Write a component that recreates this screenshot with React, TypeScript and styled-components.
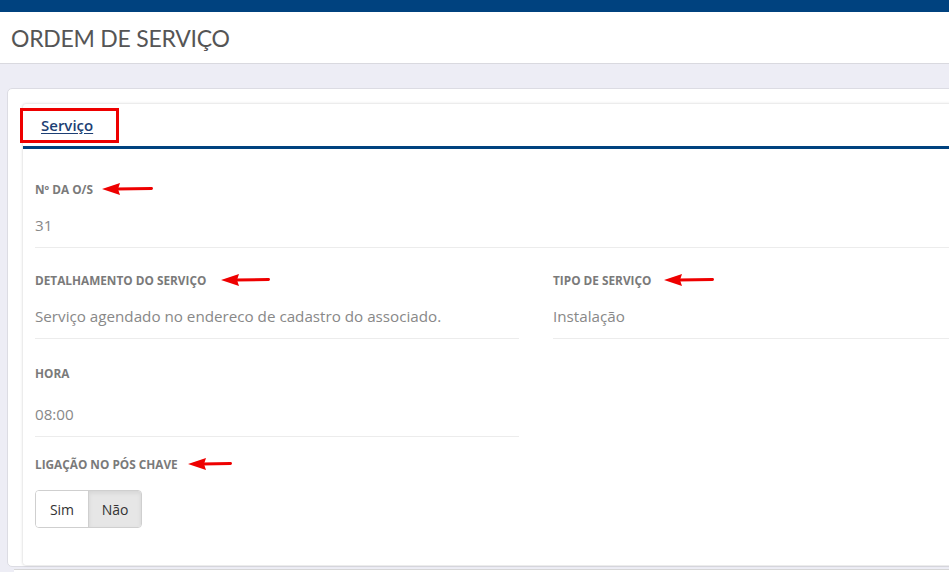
import React from "react";
import styled, { createGlobalStyle } from "styled-components";

const NAVY = "#00427f";
const MARK = "#ee0000";

const GlobalStyle = createGlobalStyle`
  html, body {
    margin: 0;
    padding: 0;
    background: #ededf5;
    overflow: hidden;
    font-family: "Open Sans", "Lato", sans-serif;
  }
`;

const TopBar = styled.div`
  height: 12px;
  background: ${NAVY};
`;

const Header = styled.header`
  height: 51px;
  display: flex;
  align-items: center;
  padding-left: 11px;
  background: #fff;
  border-bottom: 1px solid #d9d9df;
`;

const Title = styled.h1`
  margin: 0;
  font-family: "Lato", sans-serif;
  font-size: 23px;
  font-weight: 400;
  color: #555;
  letter-spacing: -0.25px;
`;

const Content = styled.main`
  padding: 24px 0 0 7px;
`;

const Card = styled.section`
  width: 1026px;
  background: #fff;
  border: 1px solid #dcdce3;
  border-radius: 5px;
  padding: 15px 0 1px 15px;
`;

const TabBox = styled.div`
  background: #fff;
  border-radius: 3px;
  box-shadow: 0 0 3px rgba(0, 0, 0, 0.22);
`;

const TabStrip = styled.div`
  height: 42px;
  display: flex;
  align-items: center;
`;

const Tab = styled.a`
  box-sizing: border-box;
  margin-left: -3px;
  width: 99px;
  height: 35px;
  display: flex;
  align-items: center;
  padding-left: 18px;
  border: 3px solid ${MARK};
  color: #1d3f74;
  font-size: 15px;
  font-weight: 600;
  text-decoration: underline;
  text-underline-offset: 2px;
`;

const Panel = styled.div`
  border-top: 3px solid ${NAVY};
  padding: 8px 12px 37px 12px;
`;

const Row = styled.div<{ $cols?: number }>`
  display: grid;
  grid-template-columns: repeat(${(p) => p.$cols ?? 1}, 1fr);
  column-gap: 34px;
`;

const Field = styled.div<{ $line?: boolean; $top: number; $gap: number }>`
  padding-top: ${(p) => p.$top}px;
  padding-bottom: ${(p) => (p.$line ? 11 : 0)}px;
  border-bottom: ${(p) => (p.$line ? "1px solid #ececec" : "none")};

  & > *:nth-child(2) {
    margin-top: ${(p) => p.$gap}px;
  }
`;

const Label = styled.div`
  display: flex;
  align-items: center;
  height: 16px;
  font-size: 11.8px;
  font-weight: 700;
  color: #7a7a7a;
  text-transform: uppercase;
`;

const Value = styled.div`
  height: 22px;
  line-height: 22px;
  font-size: 15.2px;
  color: #888;
`;

const Toggle = styled.div`
  display: inline-flex;
  height: 36px;
  border: 1px solid #cfcfcf;
  border-radius: 4px;
  overflow: hidden;
`;

const ToggleOption = styled.button<{ $active?: boolean }>`
  width: ${(p) => (p.$active ? 53 : 52)}px;
  border: none;
  border-left: ${(p) => (p.$active ? "1px solid #cfcfcf" : "none")};
  background: ${(p) => (p.$active ? "#e6e6e6" : "#fff")};
  box-shadow: ${(p) => (p.$active ? "inset 0 2px 4px rgba(0,0,0,0.08)" : "none")};
  font-family: inherit;
  font-size: 14px;
  color: #333;
  padding: 0;
`;

const Next = styled.div`
  margin: 2px 0 0 7px;
  height: 40px;
  width: 1026px;
  background: #fff;
  border-top: 1px solid #d6d6d6;
`;

const Arrow = ({ length = 50, gap = 10 }: { length?: number; gap?: number }) => (
  <svg
    width={length}
    height={14}
    viewBox={`0 0 ${length} 14`}
    style={{ marginLeft: gap }}
  >
    <line x1={14} y1={7} x2={length - 1.5} y2={6.5} stroke={MARK} strokeWidth={3} strokeLinecap="round" />
    <polygon points="0,7 18,1 16,7 18,13" fill={MARK} />
  </svg>
);

export default function App() {
  return (
    <>
      <GlobalStyle />
      <TopBar />
      <Header>
        <Title>ORDEM DE SERVIÇO</Title>
      </Header>
      <Content>
        <Card>
          <TabBox>
            <TabStrip>
              <Tab>Serviço</Tab>
            </TabStrip>
            <Panel>
              <Row>
                <Field $line $top={24} $gap={17}>
                  <Label>
                    Nº da O/S
                    <Arrow gap={9} length={51} />
                  </Label>
                  <Value>31</Value>
                </Field>
              </Row>
              <Row $cols={2}>
                <Field $line $top={24} $gap={17}>
                  <Label>
                    Detalhamento do serviço
                    <Arrow gap={15} length={49} />
                  </Label>
                  <Value>Serviço agendado no endereco de cadastro do associado.</Value>
                </Field>
                <Field $line $top={24} $gap={17}>
                  <Label>
                    Tipo de serviço
                    <Arrow gap={13} length={50} />
                  </Label>
                  <Value>Instalação</Value>
                </Field>
              </Row>
              <Row $cols={2}>
                <Field $line $top={26} $gap={22}>
                  <Label>Hora</Label>
                  <Value>08:00</Value>
                </Field>
              </Row>
              <Row>
                <Field $top={19} $gap={18}>
                  <Label>
                    Ligação no pós chave
                    <Arrow gap={10} length={44} />
                  </Label>
                  <div>
                    <Toggle>
                      <ToggleOption>Sim</ToggleOption>
                      <ToggleOption $active>Não</ToggleOption>
                    </Toggle>
                  </div>
                </Field>
              </Row>
            </Panel>
          </TabBox>
        </Card>
        <Next />
      </Content>
    </>
  );
}
